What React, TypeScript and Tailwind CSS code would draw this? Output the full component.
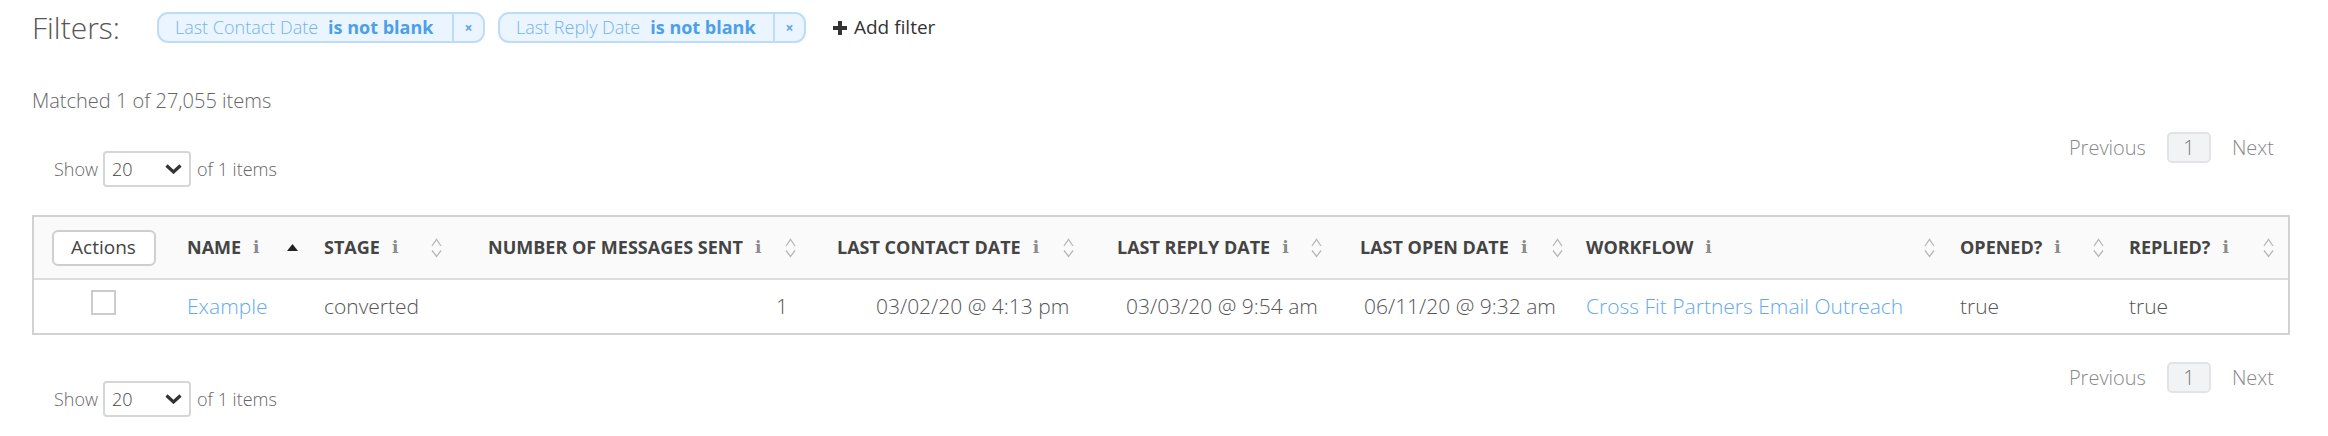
import React from "react";

const SortIcon = () => (
  <svg width="11" height="20" viewBox="0 0 11 20" fill="none" stroke="#b8b8b8" strokeWidth="1.3">
    <path d="M1 8 L5.5 1.5 L10 8" />
    <path d="M1 12.5 L5.5 18.5 L10 12.5" />
  </svg>
);

const AscIcon = () => (
  <svg width="11" height="7" viewBox="0 0 11 7">
    <path d="M0 7 L5.5 0 L11 7 Z" fill="#222" />
  </svg>
);

const Info = () => (
  <span className="ml-[12px] text-[17px] leading-none font-bold text-[#8a8a8a] [font-family:'DejaVu_Serif',serif]">i</span>
);

const Chip = ({ label, w }: { label: string; w: string }) => (
  <div className="flex h-[31px] items-stretch rounded-[11px] border-2 border-[#bedcf7] bg-[#ebf5ff]">
    <div className={`flex items-center pl-[16px] ${w}`}>
      <span className="text-[18px] font-light text-[#74b3ec]">{label}</span>
      <span className="ml-[10px] text-[18px] font-bold text-[#4c9fe8]">is not blank</span>
    </div>
    <div className="flex w-[31px] items-center justify-center border-l-2 border-[#bedcf7] text-[14px] font-bold text-[#5aa5e8]">
      ×
    </div>
  </div>
);

const ShowRow = () => (
  <div className="mt-[19px] flex items-center pl-[22px]">
    <span className="text-[18px] font-light text-[#666]">Show</span>
    <div className="ml-[5px] flex h-[36px] w-[88px] items-center justify-between rounded-[4px] border-2 border-[#d6d6d6] pl-[7px] pr-[7px]">
      <span className="text-[18px] font-light text-[#444]">20</span>
      <svg width="17" height="10" viewBox="0 0 17 10" fill="none" stroke="#333" strokeWidth="3.2">
        <path d="M1.5 1.5 L8.5 8 L15.5 1.5" />
      </svg>
    </div>
    <span className="ml-[6px] text-[18px] font-light text-[#666]">of 1 items</span>
  </div>
);

const Pager = () => (
  <div className="flex items-center pr-[16px]">
    <span className="text-[20px] font-light text-[#888]">Previous</span>
    <div className="ml-[21px] flex h-[31px] w-[44px] items-center justify-center rounded-[5px] border-2 border-[#e2e3e6] bg-[#f2f3f5] text-[20px] font-light text-[#777]">
      1
    </div>
    <span className="ml-[21px] text-[20px] font-light text-[#888]">Next</span>
  </div>
);

const cols = [
  { label: "NAME", pr: "pr-[12px]", asc: true },
  { label: "STAGE", pr: "pr-[32px]" },
  { label: "NUMBER OF MESSAGES SENT", pr: "pr-[27px]" },
  { label: "LAST CONTACT DATE", pr: "pr-[29px]" },
  { label: "LAST REPLY DATE", pr: "pr-[24px]" },
  { label: "LAST OPEN DATE", pr: "pr-[9px]" },
  { label: "WORKFLOW", pr: "pr-[11px]" },
  { label: "OPENED?", pr: "pr-[11px]" },
  { label: "REPLIED?", pr: "pr-[14px]" },
];

const grid =
  "grid grid-cols-[139px_137px_164px_349px_280px_243px_226px_374px_169px_173px]";

export default function App() {
  return (
    <div className="min-h-[436px] bg-white pl-[32px] pr-[38px] pt-[12px] [font-family:'Open_Sans',sans-serif]">
      {/* Filters */}
      <div className="flex h-[31px] items-center">
        <span className="text-[30px] font-light leading-none text-[#555]">Filters:</span>
        <div className="ml-[37px]">
          <Chip label="Last Contact Date" w="w-[293px]" />
        </div>
        <div className="ml-[13px]">
          <Chip label="Last Reply Date" w="w-[273px]" />
        </div>
        <div className="ml-[27px] flex items-center">
          <svg width="14" height="14" viewBox="0 0 14 14">
            <rect x="5" y="0" width="4" height="14" fill="#333" />
            <rect x="0" y="5" width="14" height="4" fill="#333" />
          </svg>
          <span className="ml-[7px] text-[19px] text-[#333]">Add filter</span>
        </div>
      </div>

      <div className="mt-[44px] h-[28px] text-[20px] font-light leading-[28px] text-[#666]">
        Matched 1 of 27,055 items
      </div>

      <div className="mt-[17px] flex items-start justify-between">
        <ShowRow />
        <Pager />
      </div>

      {/* Table */}
      <div className="mt-[28px] border-2 border-[#d2d2d2]">
        <div className={`${grid} h-[61px] items-center bg-[#fafafa]`}>
          <div className="flex justify-center">
            <div className="flex h-[36px] w-[104px] items-center justify-center rounded-[6px] border-2 border-[#cfcfcf] bg-white text-[19px] text-[#444]">
              Actions
            </div>
          </div>
          {cols.map((c) => (
            <div key={c.label} className={`flex items-center pl-[14px] ${c.pr}`}>
              <span className="whitespace-nowrap text-[18px] font-bold text-[#444]">{c.label}</span>
              <Info />
              <div className="ml-auto flex items-center">
                {c.asc ? <AscIcon /> : <SortIcon />}
              </div>
            </div>
          ))}
        </div>
        <div className="h-[2px] bg-[#dcdcdc]" />
        <div className={`${grid} h-[53px] items-center text-[21px] font-light text-[#555]`}>
          <div className="flex justify-center self-start pt-[10px]">
            <div className="h-[25px] w-[25px] border-2 border-[#cccccc] bg-white" />
          </div>
          <div className="pl-[14px] text-[#64aae9]">Example</div>
          <div className="pl-[14px]">converted</div>
          <div className="pr-[35px] text-right">1</div>
          <div className="whitespace-nowrap pl-[53px]">03/02/20 @ 4:13 pm</div>
          <div className="whitespace-nowrap pl-[23px]">03/03/20 @ 9:54 am</div>
          <div className="whitespace-nowrap pl-[18px]">06/11/20 @ 9:32 am</div>
          <div className="whitespace-nowrap pl-[14px] text-[#64aae9]">Cross Fit Partners Email Outreach</div>
          <div className="pl-[14px]">true</div>
          <div className="pl-[14px]">true</div>
        </div>
      </div>

      <div className="mt-[27px] flex items-start justify-between">
        <ShowRow />
        <Pager />
      </div>
    </div>
  );
}
